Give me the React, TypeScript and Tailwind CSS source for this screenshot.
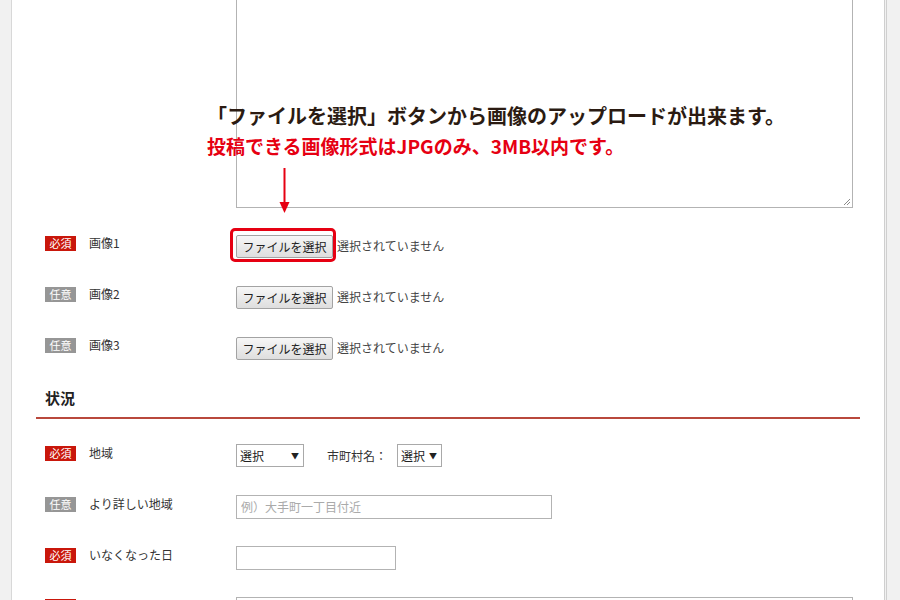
import React from 'react';

type Kind = 'req' | 'opt';

function Badge({ kind }: { kind: Kind }) {
  return (
    <span
      className={
        kind === 'req'
          ? 'block h-[15px] w-[31px] shrink-0 bg-[#c9170b] text-center text-[11px] leading-[15px] text-white'
          : 'block h-[15px] w-[31px] shrink-0 bg-[#969696] text-center text-[11px] leading-[15px] text-white'
      }
    >
      {kind === 'req' ? '必須' : '任意'}
    </span>
  );
}

function Row({ kind, label, children }: { kind: Kind; label: string; children: React.ReactNode }) {
  return (
    <div className="flex h-[51px] items-center pl-[33px]">
      <div className="mb-[5px] flex w-[191px] shrink-0 items-center">
        <Badge kind={kind} />
        <span className="ml-[13px] text-[12px] text-[#333]">{label}</span>
      </div>
      <div className="flex items-center">{children}</div>
    </div>
  );
}

function FileField({ highlight }: { highlight?: boolean }) {
  return (
    <>
      <div className="relative">
        {highlight && (
          <div className="absolute -left-[6px] -top-[5px] h-[34px] w-[106px] rounded-[5px] border-[3px] border-[#e60012]" />
        )}
        <button className="relative h-[23px] w-[97px] rounded-[2px] border border-[#a3a3a3] bg-gradient-to-b from-[#f7f7f7] to-[#dedede] text-[12px] text-[#222]">
          ファイルを選択
        </button>
      </div>
      <span className="ml-[4px] text-[12px] text-[#444]">選択されていません</span>
    </>
  );
}

function Select({ w }: { w: string }) {
  return (
    <div
      className={`flex h-[23px] ${w} shrink-0 items-center justify-between gap-[3px] whitespace-nowrap border border-[#a9a9a9] bg-white pl-[3px] pr-[4px] text-[12px] text-[#222]`}
    >
      <span>選択</span>
      <span className="text-[8px]">▼</span>
    </div>
  );
}

export default function App() {
  return (
    <div className="flex h-[600px] w-[900px] overflow-hidden bg-white font-['Noto_Sans_CJK_JP','Noto_Sans',sans-serif]">
      <div className="w-[12px] shrink-0 border-r border-[#d8d8d8] bg-[#f1f1f1]" />

      <main className="relative w-[872px] shrink-0 bg-white">
        {/* textarea continuing from above */}
        <div className="relative ml-[224px] h-[208px] w-[617px] border-x border-b border-[#b3b3b3]">
          <svg className="absolute bottom-[1px] right-[1px]" width="9" height="9" viewBox="0 0 9 9">
            <path d="M8 2 L2 8 M8 5 L5 8" stroke="#8a8a8a" strokeWidth="1" />
          </svg>
        </div>

        {/* annotation */}
        <div className="absolute left-[195px] top-[101px] font-bold">
          <div className="text-[20px] leading-[30px] text-[#2b1b12]">
            「ファイルを選択」ボタンから画像のアップロードが出来ます。
          </div>
          <div className="text-[19px] leading-[30px] text-[#e60012]">
            投稿できる画像形式はJPGのみ、3MB以内です。
          </div>
        </div>
        <svg className="absolute left-[267px] top-[168px]" width="11" height="45" viewBox="0 0 11 45">
          <path d="M5.5 0 V36" stroke="#e60012" strokeWidth="2" />
          <path d="M0.5 34 L10.5 34 L5.5 45 Z" fill="#e60012" />
        </svg>

        <div className="mt-[12px]">
          <Row kind="req" label="画像1">
            <FileField highlight />
          </Row>
          <Row kind="opt" label="画像2">
            <FileField />
          </Row>
          <Row kind="opt" label="画像3">
            <FileField />
          </Row>
        </div>

        <h2 className="ml-[33px] mt-[15px] text-[15px] font-bold leading-[20px] text-[#222]">状況</h2>
        <div className="mx-[24px] mt-[9px] h-[2px] bg-[#b9483c]" />

        <div className="mt-[11px]">
          <Row kind="req" label="地域">
            <Select w="w-[68px]" />
            <span className="ml-[23px] mr-[10px] text-[12px] text-[#333]">市町村名：</span>
            <Select w="w-[45px]" />
          </Row>
          <Row kind="opt" label="より詳しい地域">
            <input
              className="h-[24px] w-[316px] border border-[#b3b3b3] px-[4px] text-[12px] outline-none placeholder:text-[#aaa]"
              placeholder="例）大手町一丁目付近"
            />
          </Row>
          <Row kind="req" label="いなくなった日">
            <input className="h-[24px] w-[160px] border border-[#b3b3b3] px-[4px] text-[12px] outline-none" />
          </Row>
          <div className="flex items-start pl-[33px] pt-[14px]">
            <div className="flex w-[191px] shrink-0 items-center">
              <Badge kind="req" />
              <span className="ml-[13px] text-[12px] text-[#333]">詳しい状況など</span>
            </div>
            <div className="h-[60px] w-[617px] border border-[#b3b3b3]" />
          </div>
        </div>
      </main>

      <div className="flex-1 border-l-[3px] border-double border-[#cfcfcf] bg-[#f1f1f1]" />
    </div>
  );
}
